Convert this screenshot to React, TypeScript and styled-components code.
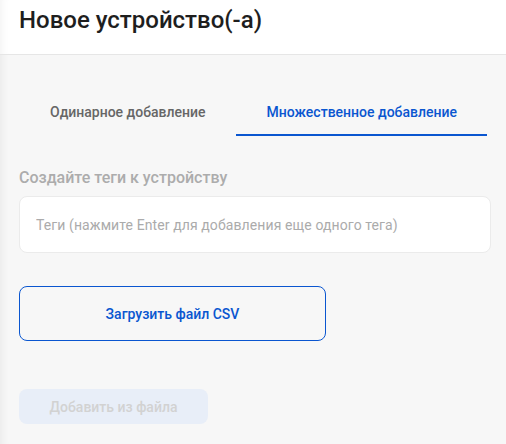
import React from "react";
import styled, { createGlobalStyle } from "styled-components";

const GlobalStyle = createGlobalStyle`
	html, body {
		margin: 0;
		padding: 0;
		background: #f7f7f7;
	}
	* {
		box-sizing: border-box;
	}
`

const Page = styled.div`
	width: 506px;
	height: 444px;
	background: #f7f7f7;
	font-family: Roboto, "Liberation Sans", sans-serif;
	box-shadow: inset 10px 0 8px -8px rgba(0, 0, 0, 0.06);
	overflow: hidden;
`
const Header = styled.header`
	background: #fff;
	padding: 6px 19px 20px;
	border-bottom: 1px solid #e6e6e6;
	box-shadow: inset 10px 0 8px -8px rgba(0, 0, 0, 0.05);
`
const Title = styled.h1`
	margin: 0;
	font-size: 24px;
	line-height: 28px;
	font-weight: 500;
	color: #1e1e1e;
`
const Body = styled.main`
	display: flex;
	flex-direction: column;
	align-items: flex-start;
	padding: 35px 15px 0 19px;
`
const Tabs = styled.div`
	display: flex;
`
const Tab = styled.button<{ $active?: boolean }>`
	border: none;
	background: transparent;
	font-family: inherit;
	font-size: 14px;
	font-weight: 500;
	line-height: 20px;
	padding: 12px 30px 12px 31px;
	border-bottom: 2px solid ${(p) => (p.$active ? "#0a56d0" : "transparent")};
	color: ${(p) => (p.$active ? "#0a56d0" : "#666")};
	cursor: pointer;
`
const Label = styled.div`
	margin-top: 32px;
	font-size: 16px;
	font-weight: 500;
	line-height: 20px;
	color: #acacac;
`
const TagInput = styled.input`
	margin-top: 8px;
	width: 472px;
	height: 57px;
	background: #fff;
	border: 1px solid #ebebeb;
	border-radius: 8px;
	padding: 0 16px;
	font-family: inherit;
	font-size: 14px;
	letter-spacing: 0.1px;
	color: #333;
	outline: none;
	&::placeholder {
		color: #ababab;
	}
`
const UploadButton = styled.button`
	margin-top: 33px;
	width: 307px;
	height: 55px;
	background: transparent;
	border: 1px solid #0a56d0;
	border-radius: 8px;
	font-family: inherit;
	font-size: 14px;
	font-weight: 500;
	color: #0a56d0;
	cursor: pointer;
`
const SubmitButton = styled.button`
	margin-top: 48px;
	width: 189px;
	height: 35px;
	background: #e8eef8;
	border: none;
	border-radius: 8px;
	font-family: inherit;
	font-size: 14px;
	font-weight: 500;
	color: #d2d2d2;
`

function App() {
	return (
		<>
		<GlobalStyle />
		<Page>
			<Header>
				<Title>Новое устройство(-а)</Title>
			</Header>
			<Body>
				<Tabs>
					<Tab>Одинарное добавление</Tab>
					<Tab $active>Множественное добавление</Tab>
				</Tabs>
				<Label>Создайте теги к устройству</Label>
				<TagInput placeholder="Теги (нажмите Enter для добавления еще одного тега)" />
				<UploadButton>Загрузить файл CSV</UploadButton>
				<SubmitButton disabled>Добавить из файла</SubmitButton>
			</Body>
		</Page>
		</>
	);
}

export default App;
